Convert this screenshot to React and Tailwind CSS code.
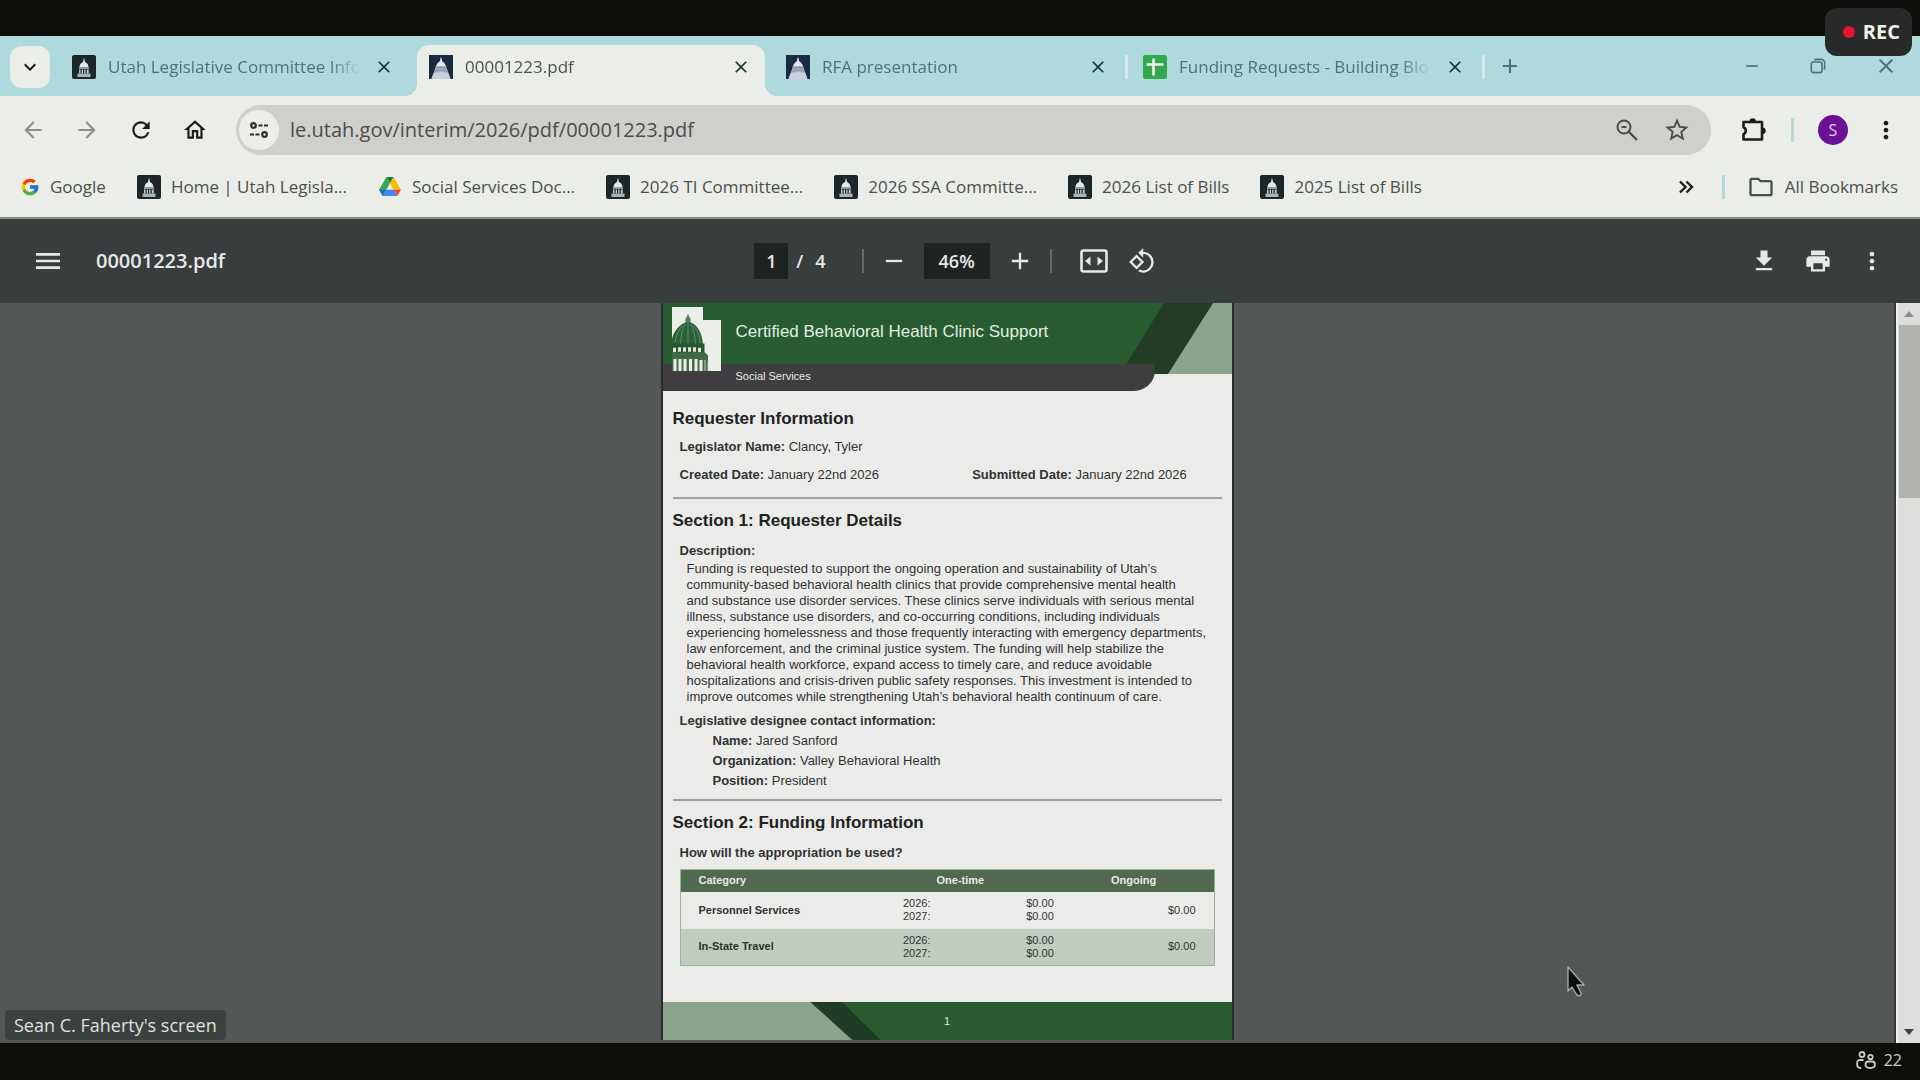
import React, { useState } from 'react';
import {
  MdAdd,
  MdArrowBack,
  MdArrowForward,
  MdClose,
  MdFileDownload,
  MdKeyboardArrowDown,
  MdMenu,
  MdMoreVert,
  MdOutlineFolder,
  MdOutlineHome,
  MdPrint,
  MdRefresh,
  MdRemove,
  MdRotate90DegreesCcw,
  MdStarBorder,
} from 'react-icons/md';
import { FcGoogle } from 'react-icons/fc';

const TABS = [
  { id: 'committee', title: 'Utah Legislative Committee Info', icon: 'capitol' },
  { id: 'pdf', title: '00001223.pdf', icon: 'capitolBlue' },
  { id: 'rfa', title: 'RFA presentation', icon: 'capitolBlue' },
  { id: 'funding', title: 'Funding Requests - Building Blo', icon: 'sheets' },
];

const BOOKMARKS = [
  { title: 'Google', icon: 'google' },
  { title: 'Home | Utah Legisla...', icon: 'capitol' },
  { title: 'Social Services Doc...', icon: 'drive' },
  { title: '2026 TI Committee...', icon: 'capitol' },
  { title: '2026 SSA Committe...', icon: 'capitol' },
  { title: '2026 List of Bills', icon: 'capitol' },
  { title: '2025 List of Bills', icon: 'capitol' },
];

const DESCRIPTION = [
  'Funding is requested to support the ongoing operation and sustainability of Utah’s',
  'community-based behavioral health clinics that provide comprehensive mental health',
  'and substance use disorder services. These clinics serve individuals with serious mental',
  'illness, substance use disorders, and co-occurring conditions, including individuals',
  'experiencing homelessness and those frequently interacting with emergency departments,',
  'law enforcement, and the criminal justice system. The funding will help stabilize the',
  'behavioral health workforce, expand access to timely care, and reduce avoidable',
  'hospitalizations and crisis-driven public safety responses. This investment is intended to',
  'improve outcomes while strengthening Utah’s behavioral health continuum of care.',
];

const FUNDING = [
  { category: 'Personnel Services', ongoing: '$0.00', rowClass: '' },
  { category: 'In-State Travel', ongoing: '$0.00', rowClass: 'bg-[#c0ccc0]' },
];

const CapitolIcon = () => (
  <svg viewBox="0 0 24 24" className="size-6 shrink-0" aria-hidden="true">
    <rect width="24" height="24" rx="2" fill="#1d2629" />
    <path d="M12 2.500l1 4.500c2.400 1 3.300 2.800 3.500 5h-9c.2-2.200 1.100-4 3.500-5z" fill="#e4e8ec" />
    <path d="M7 12h10v2H7z" fill="#8e989f" />
    <path d="M7 14.500h1.500v4H7zm2.700 0h1.300v4H9.700zm2.500 0h1.300v4h-1.300zm2.600 0h1.900v4h-1.900z" fill="#c4cace" />
    <path d="M5.500 18.500h13V22h-13z" fill="#aab2b8" />
  </svg>
);

const CapitolBlueIcon = () => (
  <svg viewBox="0 0 24 24" className="size-6 shrink-0" aria-hidden="true">
    <rect width="24" height="24" fill="#1a2a42" />
    <path d="M12 2l1.200 4.500c2.800 1.500 4 4 4.800 7.500L21.500 24h-19L6 14c.8-3.500 2-6 4.800-7.500z" fill="#aab4c6" />
    <path d="M12 2l1.200 4.500c1.800 1 2.800 2.500 3.300 4.500h-9c.5-2 1.500-3.500 3.300-4.500z" fill="#e6eaf0" />
    <path d="M7 13.500c3-1.500 7-1.500 10 0M6 16.500c4-2 8-2 12 0" stroke="#7d899d" strokeWidth="1" fill="none" />
    <path d="M4.500 18.500c5-2 10-2 15 0L21.500 24h-19z" fill="#c9cfdc" />
  </svg>
);

const SheetsIcon = () => (
  <svg viewBox="0 0 24 24" className="size-6 shrink-0" aria-hidden="true">
    <rect width="24" height="24" rx="2" fill="#34a84e" />
    <path d="M3.500 9.500h17M10.500 3.500v17" stroke="#f1f7ee" strokeWidth="2.600" />
  </svg>
);

const DriveIcon = () => (
  <svg viewBox="0 0 24 22" className="w-6 h-5 shrink-0" aria-hidden="true">
    <path d="M8 0h8l-4 7z" fill="#188038" />
    <path d="M8 0l4 7-8 14-4-7z" fill="#34a853" />
    <path d="M16 0l8 14h-8l-4-7z" fill="#fbbc04" />
    <path d="M8 14L4 21l-4-7z" fill="#1967d2" />
    <path d="M8 14h8l4 7H4z" fill="#4285f4" />
    <path d="M16 14h8l-4 7z" fill="#ea4335" />
  </svg>
);

const SiteIcon = ({ name }) => {
  if (name === 'google') return <FcGoogle className="size-5 shrink-0" />;
  if (name === 'drive') return <DriveIcon />;
  if (name === 'sheets') return <SheetsIcon />;
  if (name === 'capitolBlue') return <CapitolBlueIcon />;
  return <CapitolIcon />;
};

const TuneIcon = () => (
  <svg viewBox="0 0 20 20" className="size-5" fill="none" stroke="#2c2e2c" strokeWidth="2.200" aria-hidden="true">
    <circle cx="4.500" cy="5.500" r="2.300" />
    <path d="M9.500 5.500h4M15 5.500h4" />
    <circle cx="15.500" cy="14.500" r="2.300" />
    <path d="M1 14.500h4M6.500 14.500h4" />
  </svg>
);

const ZoomOutIcon = () => (
  <svg viewBox="0 0 24 24" className="size-6" fill="none" stroke="currentColor" strokeWidth="2" aria-hidden="true">
    <circle cx="9" cy="9" r="6.500" />
    <path d="M13.500 13.500L22 22" strokeWidth="2.400" />
    <path d="M6.500 9h5" />
  </svg>
);

const ExtensionIcon = () => (
  <svg viewBox="0 0 28 28" className="size-7" aria-hidden="true">
    <path
      d="M4.500 6h18.500v17.500H4.500v-5.500c3-.5 3-6 0-6.500z"
      fill="none"
      stroke="#1b1c1b"
      strokeWidth="2.600"
      strokeLinejoin="round"
    />
    <path d="M10.500 5.500a3.200 3.200 0 0 1 6.400 0zM23.500 11.500a3.200 3.200 0 0 1 0 6.400z" fill="#1b1c1b" />
  </svg>
);

const RestoreIcon = () => (
  <svg viewBox="0 0 18 18" className="size-4" fill="none" stroke="currentColor" strokeWidth="1.800" aria-hidden="true">
    <rect x="1.500" y="4.500" width="12" height="12" rx="2.500" />
    <path d="M5 2.500c.5-.8 1-1 2-1h5.500a4 4 0 0 1 4 4V11c0 1-.2 1.500-1 2" />
  </svg>
);

const FitPageIcon = () => (
  <svg viewBox="0 0 28 24" className="w-7 h-6" aria-hidden="true">
    <rect x="1.500" y="1.500" width="25" height="21" rx="2" fill="none" stroke="currentColor" strokeWidth="2.600" />
    <path d="M10.500 7.500v9L5 12zM17.500 7.500v9L23 12z" fill="currentColor" />
  </svg>
);

const OverflowIcon = () => (
  <svg viewBox="0 0 16 14" className="w-4 h-3.5" fill="none" stroke="#1d1e1d" strokeWidth="2.400" aria-hidden="true">
    <path d="M2 1.500L7.500 7 2 12.500M8.500 1.500L14 7l-5.500 5.500" />
  </svg>
);

const PeopleIcon = () => (
  <svg viewBox="0 0 20 18" className="w-5 h-[18px]" fill="none" stroke="currentColor" strokeWidth="1.800" aria-hidden="true">
    <circle cx="6" cy="3.500" r="2.500" />
    <circle cx="14.500" cy="6" r="2.200" />
    <path d="M7.500 9H4a2.500 2.500 0 0 0-2.800 2.600v2.400c0 1.800 1.500 3 4 3" />
    <path d="M12.500 10.500h3.500c2 0 3 1.200 3 3 0 2.200-1.500 3.500-4.700 3.500s-4.800-1.300-4.800-3.500c0-1.800 1-3 3-3z" />
  </svg>
);

const CapitolLogo = () => (
  <svg viewBox="0 0 50 66" className="w-[50px] h-[66px] shrink-0" aria-hidden="true">
    <path d="M1 1h31v13h18v51H1z" fill="#eceee9" />
    <path d="M17 7.500l1 3 1.500 2v3l1.500 2h-8l1.500-2v-3l1.500-2z" fill="#587c60" />
    <path d="M1 33c1-6 6-13 12-16h8c6 3 10 10 11 22H1z" fill="#2b6238" />
    <path
      d="M17 18v20M14 18c-3 6-4 12-4.500 20M20 18c3 6 4 12 4.500 20M11 20C7 25 5 30 4 36M23 20c4 5 6 11 6.500 18"
      stroke="#6b9572"
      strokeWidth="0.800"
      fill="none"
    />
    <path d="M1 37.500h32.500V48H1z" fill="#28562f" />
    <path d="M2 44h3M7 43.500h3M12 43.500h3M17 43.500h3M22 43.500h3M27 44h3" stroke="#e0e6dd" strokeWidth="4.500" />
    <path d="M1 46.500h33l3 3v15.500H1z" fill="#3f6b47" />
    <path d="M4 53v12M9 53v12M14 53v12M19.500 53v12M25 53v12M30 54v11" stroke="#eceee9" strokeWidth="3" />
    <path d="M34 54v11M37 55v10" stroke="#c8d2c7" strokeWidth="1" />
  </svg>
);

const TabStrip = () => {
  const [active, setActive] = useState('pdf');

  return (
    <div className="flex items-end h-[60px] bg-[#afdadd] text-[#4a7479]">
      <button
        type="button"
        aria-label="Search tabs"
        className="flex items-center justify-center w-10 h-[42px] ml-2.5 mr-2.5 mb-2 rounded-xl bg-[#ebede8] text-[#1b1c1b]"
      >
        <MdKeyboardArrowDown className="size-6" />
      </button>
      {TABS.map((tab, i) => {
        const isActive = tab.id === active;
        return (
          <div key={tab.id} className="flex items-center flex-1 max-w-[357px]">
            <div
              className={
                isActive
                  ? 'relative flex items-center flex-1 min-w-0 h-[51px] px-3 pb-2 rounded-t-xl bg-[#ebede8] text-[#4c504e]'
                  : 'flex items-center flex-1 min-w-0 h-[51px] px-3 pb-2'
              }
            >
              {isActive && (
                <>
                  <span className="absolute bottom-0 -left-3 size-3 bg-[radial-gradient(circle_at_0_0,transparent_12px,#ebede8_12px)]" />
                  <span className="absolute bottom-0 -right-3 size-3 bg-[radial-gradient(circle_at_100%_0,transparent_12px,#ebede8_12px)]" />
                </>
              )}
              <button
                type="button"
                onClick={() => setActive(tab.id)}
                className="flex items-center gap-3 flex-1 min-w-0 mr-3 text-left"
              >
                <SiteIcon name={tab.icon} />
                <span className="flex-1 overflow-hidden whitespace-nowrap text-[17px] leading-6 [mask-image:linear-gradient(to_right,black_88%,transparent)]">
                  {tab.title}
                </span>
              </button>
              <button
                type="button"
                aria-label={`Close ${tab.title}`}
                className="flex items-center justify-center size-6 text-[#1f3336]"
              >
                <MdClose className="size-5" />
              </button>
            </div>
            <span className={i >= 2 ? 'w-[3px] h-6 mx-[3px] mb-2 bg-[#d9e9e6]' : 'w-[3px] h-6 mx-[3px]'} />
          </div>
        );
      })}
      <button type="button" aria-label="New tab" className="ml-2 mb-4 p-0.5">
        <MdAdd className="size-6" />
      </button>
      <div className="flex items-center gap-12 ml-auto mr-[22px] mb-4 h-7">
        <button type="button" aria-label="Minimize">
          <MdRemove className="size-5" />
        </button>
        <button type="button" aria-label="Restore">
          <RestoreIcon />
        </button>
        <button type="button" aria-label="Close window">
          <MdClose className="size-6" />
        </button>
      </div>
    </div>
  );
};

const AddressBar = () => {
  const [url, setUrl] = useState('le.utah.gov/interim/2026/pdf/00001223.pdf');

  return (
    <div className="flex items-center h-[68px] px-5 text-[#1b1c1b]">
      <div className="flex items-center gap-7">
        <button type="button" aria-label="Back" className="text-[#8d908d]">
          <MdArrowBack className="size-[26px]" />
        </button>
        <button type="button" aria-label="Forward" className="text-[#8d908d]">
          <MdArrowForward className="size-[26px]" />
        </button>
        <button type="button" aria-label="Reload">
          <MdRefresh className="size-[26px]" />
        </button>
        <button type="button" aria-label="Home">
          <MdOutlineHome className="size-[26px]" />
        </button>
      </div>
      <div className="flex items-center flex-1 h-[50px] ml-7 pl-[3px] pr-5 rounded-full bg-[#cfd0cc] text-[#4b4d4b]">
        <button
          type="button"
          aria-label="View site information"
          className="flex items-center justify-center size-10 rounded-full bg-[#ebede8]"
        >
          <TuneIcon />
        </button>
        <input
          type="text"
          aria-label="Address and search bar"
          value={url}
          onChange={(e) => setUrl(e.target.value)}
          className="flex-1 min-w-0 ml-[11px] bg-transparent text-xl outline-none"
        />
        <button type="button" aria-label="Zoom" className="mr-6">
          <ZoomOutIcon />
        </button>
        <button type="button" aria-label="Bookmark this tab">
          <MdStarBorder className="size-7" />
        </button>
      </div>
      <button type="button" aria-label="Extensions" className="ml-7">
        <ExtensionIcon />
      </button>
      <span className="w-[3px] h-6 ml-6 bg-[#b5d8d8]" />
      <button
        type="button"
        aria-label="Profile"
        className="flex items-center justify-center size-[30px] ml-6 rounded-full bg-[#6a1196] text-base text-[#e3cdea]"
      >
        S
      </button>
      <button type="button" aria-label="Browser menu" className="ml-6">
        <MdMoreVert className="size-7" />
      </button>
    </div>
  );
};

const BookmarksBar = () => (
  <nav className="flex items-center h-[53px] pl-5 pr-[22px] pb-2 text-[17px] text-[#4b504c]">
    <ul className="flex items-center gap-[31px]">
      {BOOKMARKS.map((bookmark) => (
        <li key={bookmark.title}>
          <a href="#" className="flex items-center gap-2.5 whitespace-nowrap">
            <SiteIcon name={bookmark.icon} />
            {bookmark.title}
          </a>
        </li>
      ))}
    </ul>
    <button type="button" aria-label="More bookmarks" className="ml-auto">
      <OverflowIcon />
    </button>
    <span className="w-[3px] h-6 ml-7 bg-[#b5d8d8]" />
    <a href="#" className="flex items-center gap-2.5 ml-[22px] whitespace-nowrap">
      <MdOutlineFolder className="size-7" />
      All Bookmarks
    </a>
  </nav>
);

const PdfToolbar = () => {
  const [page, setPage] = useState('1');
  const [zoom, setZoom] = useState('46%');

  return (
    <div className="grid grid-cols-[1fr_auto_1fr] items-center h-[86px] border-t-2 border-[#8a8c88] bg-[#383d3d] text-[#e6e9e6]">
      <div className="flex items-center gap-8 pl-8">
        <button type="button" aria-label="Menu">
          <MdMenu className="size-8" />
        </button>
        <span className="text-xl font-semibold">00001223.pdf</span>
      </div>
      <div className="flex items-center mr-2.5 text-lg font-semibold">
        <input
          type="text"
          aria-label="Page number"
          value={page}
          onChange={(e) => setPage(e.target.value)}
          className="w-[34px] h-9 bg-[#1f2423] text-center outline-none"
        />
        <span className="ml-2">/</span>
        <span className="ml-3">4</span>
        <span className="w-0.5 h-6 ml-9 bg-[#656a69]" />
        <button type="button" aria-label="Zoom out" className="ml-4">
          <MdRemove className="size-7" />
        </button>
        <input
          type="text"
          aria-label="Zoom level"
          value={zoom}
          onChange={(e) => setZoom(e.target.value)}
          className="w-[66px] h-9 mx-4 bg-[#1f2423] text-center outline-none"
        />
        <button type="button" aria-label="Zoom in">
          <MdAdd className="size-7" />
        </button>
        <span className="w-0.5 h-6 ml-4 bg-[#656a69]" />
        <button type="button" aria-label="Fit to page" className="ml-7">
          <FitPageIcon />
        </button>
        <button type="button" aria-label="Rotate counterclockwise" className="ml-5">
          <MdRotate90DegreesCcw className="size-7" />
        </button>
      </div>
      <div className="flex items-center justify-end gap-[26px] pr-[34px]">
        <button type="button" aria-label="Download">
          <MdFileDownload className="size-7" />
        </button>
        <button type="button" aria-label="Print">
          <MdPrint className="size-7" />
        </button>
        <button type="button" aria-label="More actions">
          <MdMoreVert className="size-7" />
        </button>
      </div>
    </div>
  );
};

const Field = ({ label, value }) => (
  <p>
    <strong>{label}:</strong> {value}
  </p>
);

const PdfPage = () => (
  <article className="flex flex-col w-[573px] border-x-2 border-[#2a2f2e] bg-[#ebece9] font-['Liberation_Sans',Arial,sans-serif] text-[13px] leading-4 text-[#303331]">
    <header className="relative h-[88px] text-[#e3efe2]">
      <svg viewBox="0 0 568 88" preserveAspectRatio="none" className="absolute inset-0 size-full" aria-hidden="true">
        <path d="M0 0h568v71H0z" fill="#265c2f" />
        <path d="M549 0h19v71h-64z" fill="#8aa58c" />
        <path d="M500 0h49l-45 71h-42v-9z" fill="#233d25" />
        <path d="M0 61h491v7a22 20 0 0 1-22 20H0z" fill="#3f3d40" />
      </svg>
      <div className="relative flex gap-3 pl-2 pt-[3px]">
        <CapitolLogo />
        <div className="pl-[3px]">
          <h1 className="pt-3.5 text-[17px] leading-6">Certified Behavioral Health Clinic Support</h1>
          <p className="pt-6 text-[11px] leading-4">Social Services</p>
        </div>
      </div>
    </header>

    <div className="px-2.5">
      <section className="pt-4 pb-3.5 border-b-2 border-[#9fa19f]">
        <h2 className="text-[17px] leading-6 font-bold text-[#202321]">Requester Information</h2>
        <div className="flex flex-col gap-3 pl-[7px] pt-2">
          <Field label="Legislator Name" value="Clancy, Tyler" />
          <div className="flex">
            <div className="w-[54%]">
              <Field label="Created Date" value="January 22nd 2026" />
            </div>
            <Field label="Submitted Date" value="January 22nd 2026" />
          </div>
        </div>
      </section>

      <section className="pt-2.5 pb-2.5 border-b-2 border-[#9fa19f]">
        <h2 className="text-[17px] leading-6 font-bold text-[#202321]">Section 1: Requester Details</h2>
        <div className="pl-[7px] pt-2.5">
          <h3 className="font-bold">Description:</h3>
          <p className="pl-[7px] pt-0.5">
            {DESCRIPTION.map((line) => (
              <span key={line} className="block whitespace-nowrap">
                {line}
              </span>
            ))}
          </p>
          <h3 className="pt-2 font-bold">Legislative designee contact information:</h3>
          <div className="flex flex-col gap-1 pl-[33px] pt-1">
            <Field label="Name" value="Jared Sanford" />
            <Field label="Organization" value="Valley Behavioral Health" />
            <Field label="Position" value="President" />
          </div>
        </div>
      </section>

      <section className="pt-2.5">
        <h2 className="text-[17px] leading-6 font-bold text-[#202321]">Section 2: Funding Information</h2>
        <div className="px-[7px] pt-2.5">
          <h3 className="font-bold">How will the appropriation be used?</h3>
          <table className="w-full mt-2 table-fixed border border-[#9db09f] text-[11px] leading-[13px]">
            <colgroup>
              <col className="w-[35%]" />
              <col className="w-[17%]" />
              <col className="w-[18%]" />
              <col className="w-[30%]" />
            </colgroup>
            <thead>
              <tr className="h-[22px] bg-[#50694f] text-[#e6ede4]">
                <th className="pl-[18px] text-left">Category</th>
                <th colSpan={2}>One-time</th>
                <th>Ongoing</th>
              </tr>
            </thead>
            <tbody>
              {FUNDING.map((row) => (
                <tr key={row.category} className={`h-[37px] ${row.rowClass}`}>
                  <th scope="row" className="pl-[18px] text-left">
                    {row.category}
                  </th>
                  <td className="pl-9">
                    2026:
                    <br />
                    2027:
                  </td>
                  <td className="text-right">
                    $0.00
                    <br />
                    $0.00
                  </td>
                  <td className="pr-[18px] text-right">{row.ongoing}</td>
                </tr>
              ))}
            </tbody>
          </table>
        </div>
      </section>
    </div>

    <footer className="relative flex items-center justify-center h-[38px] mt-auto text-[11px] text-[#dbe8da]">
      <svg viewBox="0 0 568 38" preserveAspectRatio="none" className="absolute inset-0 size-full" aria-hidden="true">
        <path d="M0 0h568v38H0z" fill="#285c30" />
        <path d="M147 0h32l38 38h-30z" fill="#213c24" />
        <path d="M0 0h147l42 38H0z" fill="#8aa58c" />
      </svg>
      <span className="relative">1</span>
    </footer>
  </article>
);

const Scrollbar = () => (
  <div className="flex flex-col items-center w-6 border-l-2 border-[#f4f5f2] bg-[#dddedb]">
    <svg viewBox="0 0 10 6" className="w-2.5 h-1.5 mt-2 mb-2" aria-hidden="true">
      <path d="M0 6l5-6 5 6z" fill="#8c8e8b" />
    </svg>
    <div className="w-[21px] h-[173px] bg-[#b1b3af]" />
    <svg viewBox="0 0 10 6" className="w-2.5 h-1.5 mt-auto mb-2" aria-hidden="true">
      <path d="M0 0l5 6 5-6z" fill="#3c3f3c" />
    </svg>
  </div>
);

const App = () => {
  return (
    <div className="relative flex flex-col min-h-screen bg-[#0e0f0b] pt-9 font-['Open_Sans','Noto_Sans',sans-serif]">
      <div className="bg-[#ebede8]">
        <TabStrip />
        <AddressBar />
        <BookmarksBar />
      </div>
      <PdfToolbar />

      <main className="relative flex flex-1 bg-[#535857]">
        <div className="flex flex-1 justify-center pb-[3px] border-r-2 border-[#343938]">
          <PdfPage />
        </div>
        <Scrollbar />
        <span className="absolute left-[5px] bottom-[3px] px-[9px] py-0.5 rounded bg-[#3b413f] text-lg leading-[26px] text-[#dfe3df]">
          Sean C. Faherty's screen
        </span>
        <svg viewBox="0 0 20 32" className="absolute right-[334px] bottom-[46px] w-5 h-8" aria-hidden="true">
          <path
            d="M2 2v24l4-4 5 8c1 1.500 5 .5 4-2l-4-8h7z"
            fill="#0c0d0c"
            stroke="#a5aaa7"
            strokeWidth="1.400"
            strokeLinejoin="round"
          />
        </svg>
      </main>

      <footer className="flex items-center justify-end gap-2 h-[37px] pr-[18px] pb-1 text-base text-[#c9ccc7]">
        <PeopleIcon />
        <span>22</span>
      </footer>

      <div className="absolute top-2 right-2 flex items-center gap-2 h-12 pl-[18px] pr-3 rounded-xl bg-[#272a29] text-xl font-bold text-[#f0f2ef]">
        <span className="size-3 rounded-full bg-[#e8132f]" />
        REC
      </div>
    </div>
  );
};

export default App;
